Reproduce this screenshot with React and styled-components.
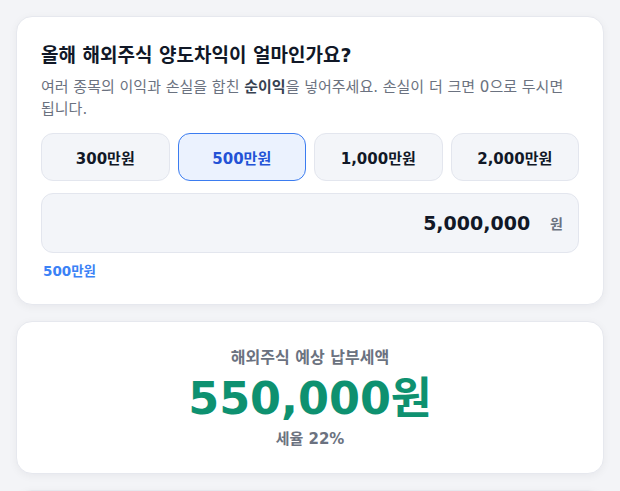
import React, { useState } from 'react'
import styled, { createGlobalStyle } from 'styled-components';

const GlobalStyle = createGlobalStyle`
  * { box-sizing: border-box; }
  body {
    margin: 0;
    background: #f3f4f7;
    font-family: "DejaVu Sans", "Noto Sans CJK KR", sans-serif;
    color: #111827;
  }
`;

const presets = [
  { label: '300만원', value: 3000000 },
  { label: '500만원', value: 5000000 },
  { label: '1,000만원', value: 10000000 },
  { label: '2,000만원', value: 20000000 },
];

const fmt = (n) => n.toLocaleString('en-US');

function App() {
  const [amount, setAmount] = useState(5000000);
  const tax = Math.round(amount * 0.11);

  return (
    <>
      <GlobalStyle />
      <Page>
        <Card>
          <Title>올해 해외주식 양도차익이 얼마인가요?</Title>
          <Desc>
            여러 종목의 이익과 손실을 합친 <strong>순이익</strong>을 넣어주세요. 손실이 더 크면 0으로 두시면 됩니다.
          </Desc>
          <PresetRow>
            {presets.map((p) => (
              <Preset
                key={p.value}
                $active={p.value === amount}
                onClick={() => setAmount(p.value)}
              >
                {p.label}
              </Preset>
            ))}
          </PresetRow>
          <InputBox>
            <AmountInput
              value={fmt(amount)}
              onChange={(e) => {
                const n = Number(e.target.value.replace(/[^0-9]/g, ''));
                setAmount(n);
              }}
            />
            <Unit>원</Unit>
          </InputBox>
          <Helper>{amount / 10000}만원</Helper>
        </Card>

        <ResultCard>
          <ResultLabel>해외주식 예상 납부세액</ResultLabel>
          <ResultValue>{fmt(tax)}원</ResultValue>
          <ResultNote>세율 22%</ResultNote>
        </ResultCard>

        <ResultCard>
          <ResultLabel>기본공제 250만원 적용</ResultLabel>
        </ResultCard>
      </Page>
    </>
  );
};

export default App;

const Page = styled.div`
display: flex;
flex-direction: column;
gap: 16px;
padding: 16px;
`;
const Card = styled.div`
background: #fff;
border: 1px solid #e6e8ee;
border-radius: 16px;
box-shadow: 0 2px 8px rgba(17, 24, 39, 0.05);
padding: 26px 24px 24px;
`;
const Title = styled.h2`
margin: 0;
font-size: 19px;
line-height: 25px;
font-weight: 700;
color: #111827;
`;
const Desc = styled.p`
margin: 8px 0 13px;
font-size: 15px;
line-height: 22px;
color: #6b7280;
strong {
  color: #374151;
  font-weight: 700;
}
`;
const PresetRow = styled.div`
display: grid;
grid-template-columns: repeat(4, 1fr);
gap: 8px;
`;
const Preset = styled.button`
height: 48px;
border-radius: 12px;
border: 1px solid ${(p) => (p.$active ? '#3b7cf0' : '#e3e6ee')};
background: ${(p) => (p.$active ? '#ebf2fe' : '#f3f5f9')};
color: ${(p) => (p.$active ? '#2352d6' : '#111827')};
font-family: inherit;
font-size: 15px;
font-weight: 700;
cursor: pointer;
`;
const InputBox = styled.div`
display: flex;
align-items: center;
gap: 20px;
height: 60px;
margin-top: 12px;
padding: 0 15px 0 16px;
background: #f3f5f9;
border: 1px solid #e3e6ee;
border-radius: 12px;
`;
const AmountInput = styled.input`
flex: 1;
min-width: 0;
border: none;
outline: none;
background: transparent;
text-align: right;
font-family: inherit;
font-size: 19px;
font-weight: 700;
color: #111827;
padding: 0;
`;
const Unit = styled.span`
font-size: 14px;
font-weight: 700;
color: #6b7280;
`;
const Helper = styled.div`
margin-top: 9px;
padding-left: 2px;
font-size: 13.5px;
line-height: 18px;
font-weight: 700;
color: #3b82f6;
`;
const ResultCard = styled(Card)`
display: flex;
flex-direction: column;
align-items: center;
padding: 26px 24px 24px;
`;
const ResultLabel = styled.div`
font-size: 16px;
line-height: 20px;
font-weight: 600;
color: #6b7280;
`;
const ResultValue = styled.div`
margin-top: 4px;
font-size: 44.5px;
line-height: 53px;
font-weight: 700;
color: #0e9170;
`;
const ResultNote = styled.div`
margin-top: 4px;
font-size: 15px;
line-height: 20px;
font-weight: 700;
color: #6b7280;
`;
